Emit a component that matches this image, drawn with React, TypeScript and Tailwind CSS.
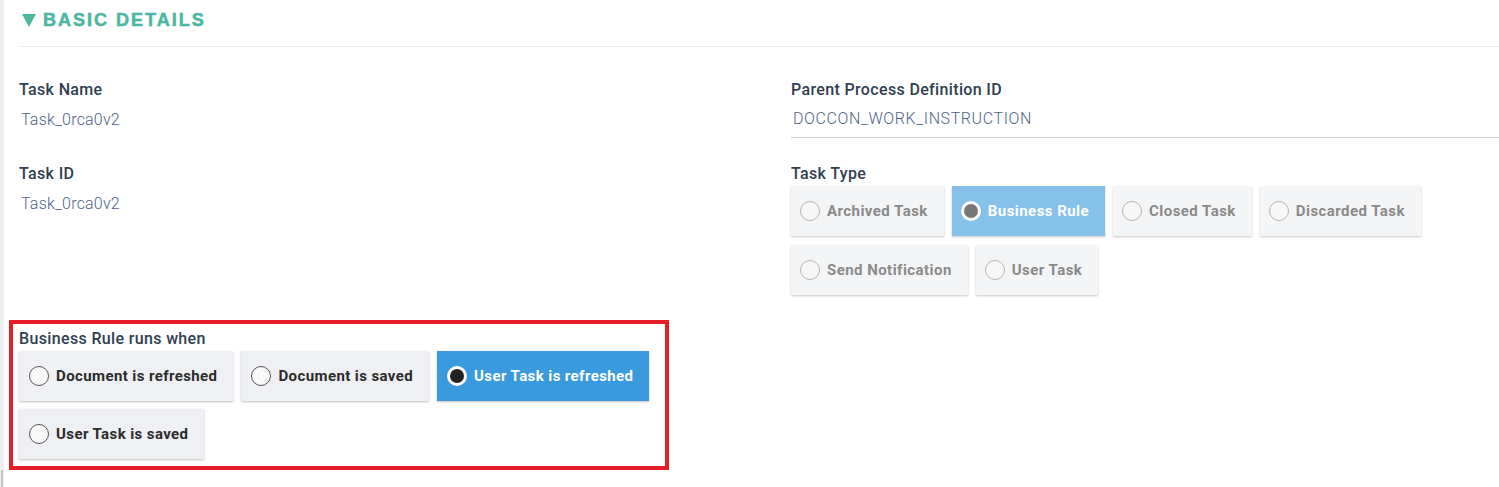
const taskTypes = [
    ["Archived Task", "Business Rule", "Closed Task", "Discarded Task"],
    ["Send Notification", "User Task"],
];

const runWhen = [
    ["Document is refreshed", "Document is saved", "User Task is refreshed"],
    ["User Task is saved"],
];

const TypeOption = ({ label, selected }: { label: string; selected: boolean }) => (
    <div
        className={`h-[50px] flex items-center gap-[7px] pl-[9px] pr-[16px] shadow-[0_1px_2px_rgba(0,0,0,0.22)] text-[15px] tracking-[0.45px] font-bold ${
            selected ? "bg-[#85c1e9] text-white" : "bg-[#f4f5f7] text-[#8a8a8a]"
        }`}
    >
        {selected ? (
            <span className="w-[20px] h-[20px] rounded-full bg-white flex items-center justify-center">
                <span className="w-[14px] h-[14px] rounded-full bg-[#777]" />
            </span>
        ) : (
            <span className="w-[20px] h-[20px] rounded-full border-[1.5px] border-[#b5b5b5] bg-[#f7f7f7]" />
        )}
        {label}
    </div>
);

const RunOption = ({ label, selected }: { label: string; selected: boolean }) => (
    <div
        className={`h-[50px] flex items-center gap-[7px] pl-[10px] pr-[16px] shadow-[0_1px_2px_rgba(0,0,0,0.25)] text-[15px] tracking-[0.4px] font-bold ${
            selected ? "bg-[#3a9ade] text-white" : "bg-[#eef0f3] text-[#2b2b2b]"
        }`}
    >
        {selected ? (
            <span className="w-[20px] h-[20px] rounded-full bg-white flex items-center justify-center">
                <span className="w-[14px] h-[14px] rounded-full bg-[#222]" />
            </span>
        ) : (
            <span className="w-[20px] h-[20px] rounded-full border-[1.5px] border-[#555] bg-[#f8f8f8]" />
        )}
        {label}
    </div>
);

const Label = ({ children }: { children: React.ReactNode }) => (
    <div className="text-[16px] font-medium tracking-[0.35px] leading-[20px] text-[#2f3e50]">{children}</div>
);

export default function App() {
    return (
        <div className="flex min-h-[487px] bg-white font-['Roboto',sans-serif]">
            {/* left gutter */}
            <div className="w-[4px] flex flex-col bg-[#eceef3]">
                <div className="flex-1" />
                <div className="h-[17px] ml-[1px] w-[2px] bg-[#c4c6cb]" />
            </div>

            <main className="flex-1 pl-[5px]">
                <div className="pl-[10px]">
                    <div className="h-[47px] pb-[7px] border-b border-[#ebedf0] flex items-center">
                        <svg width="14" height="13" viewBox="0 0 14 13" className="ml-[3px] mt-[1px]">
                            <polygon points="0,0 14,0 7,13" fill="#4db6a0" />
                        </svg>
                        <span className="ml-[7px] text-[18px] font-bold tracking-[2px] text-[#4db6a0] [-webkit-text-stroke:0.5px_#4db6a0] font-['Liberation_Sans',Arial,sans-serif] leading-none">
                            BASIC DETAILS
                        </span>
                    </div>

                    <div className="flex mt-[33px]">
                        <div className="w-[772px]">
                            <Label>Task Name</Label>
                            <div className="mt-[10px] pl-[2px] text-[16px] font-light tracking-[0.2px] leading-[20px] text-[#4e6385]">Task_0rca0v2</div>
                        </div>
                        <div className="flex-1">
                            <Label>Parent Process Definition ID</Label>
                            <div className="mt-[9px] pl-[2px] pb-[8px] border-b border-[#c8ccd3] text-[16px] font-light tracking-[0.6px] leading-[20px] text-[#4e6385]">
                                DOCCON_WORK_INSTRUCTION
                            </div>
                        </div>
                    </div>

                    <div className="flex mt-[26px]">
                        <div className="w-[772px]">
                            <Label>Task ID</Label>
                            <div className="mt-[10px] pl-[2px] text-[16px] font-light tracking-[0.2px] leading-[20px] text-[#4e6385]">Task_0rca0v2</div>
                        </div>
                        <div className="flex-1">
                            <Label>Task Type</Label>
                            <div className="mt-[2px] flex flex-col gap-[9px]">
                                {taskTypes.map((row, i) => (
                                    <div key={i} className="flex gap-[8px]">
                                        {row.map((t) => (
                                            <TypeOption key={t} label={t} selected={t === "Business Rule"} />
                                        ))}
                                    </div>
                                ))}
                            </div>
                        </div>
                    </div>
                </div>

                <div className="mt-[25px] w-[660px] border-[4px] border-[#e31e27] pl-[6px] pt-[5px] pb-[7px]">
                    <Label>Business Rule runs when</Label>
                    <div className="mt-[2px] flex flex-col gap-[8px]">
                        {runWhen.map((row, i) => (
                            <div key={i} className="flex gap-[8px]">
                                {row.map((t) => (
                                    <RunOption key={t} label={t} selected={t === "User Task is refreshed"} />
                                ))}
                            </div>
                        ))}
                    </div>
                </div>
            </main>
        </div>
    );
}
